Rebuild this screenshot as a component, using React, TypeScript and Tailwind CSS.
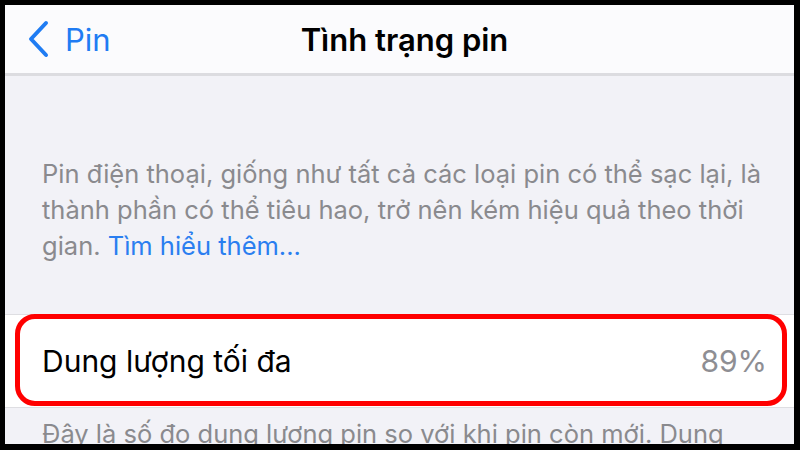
export default function App() {
  return (
    <div className="h-[450px] w-[800px] bg-black pb-[6px] pl-[5px] pr-[6px] pt-[5px]" style={{ fontFamily: "Inter, 'Noto Sans', sans-serif" }}>
      <div className="relative flex h-full flex-col overflow-hidden bg-[#f2f2f7]">
        <header className="relative flex h-[71px] shrink-0 items-center border-b-[3px] border-[#dcdce0] bg-[#fbfbfd]">
          <div className="flex items-center pl-[22px] text-[#1f7cf3]">
            <svg width="22" height="38" viewBox="0 0 22 38" fill="none">
              <path d="M19 3 L4 19 L19 35" stroke="currentColor" strokeWidth="4" strokeLinecap="round" strokeLinejoin="round" />
            </svg>
            <span className="ml-[16px] text-[31px] leading-none">Pin</span>
          </div>
          <h1 className="absolute left-0 right-0 pl-[10px] text-center text-[31px] font-semibold leading-none text-black">Tình trạng pin</h1>
        </header>

        <p className="mt-[80px] whitespace-nowrap pl-[37px] text-[25.5px] leading-[36px] text-[#8a8a8e]">
          Pin điện thoại, giống như tất cả các loại pin có thể sạc lại, là
          <br />
          thành phần có thể tiêu hao, trở nên kém hiệu quả theo thời
          <br />
          gian. <span className="text-[#2a7ef0]">Tìm hiểu thêm...</span>
        </p>

        <div className="relative mt-[50px] flex h-[94px] shrink-0 items-center justify-between border-y border-[#dedee2] bg-white pl-[37px] pr-[27px]">
          <span className="text-[30px] text-black">Dung lượng tối đa</span>
          <span className="text-[30px] text-[#8e8e93]">89%</span>
          <div className="absolute bottom-[1px] left-[10px] right-[7px] top-[-1px] rounded-[20px] border-[5px] border-[#ff0000]" />
        </div>

        <p className="mt-[8px] whitespace-nowrap pl-[37px] text-[25.5px] leading-[36px] text-[#8a8a8e]">
          Đây là số đo dung lượng pin so với khi pin còn mới. Dung
        </p>
      </div>
    </div>
  );
}
